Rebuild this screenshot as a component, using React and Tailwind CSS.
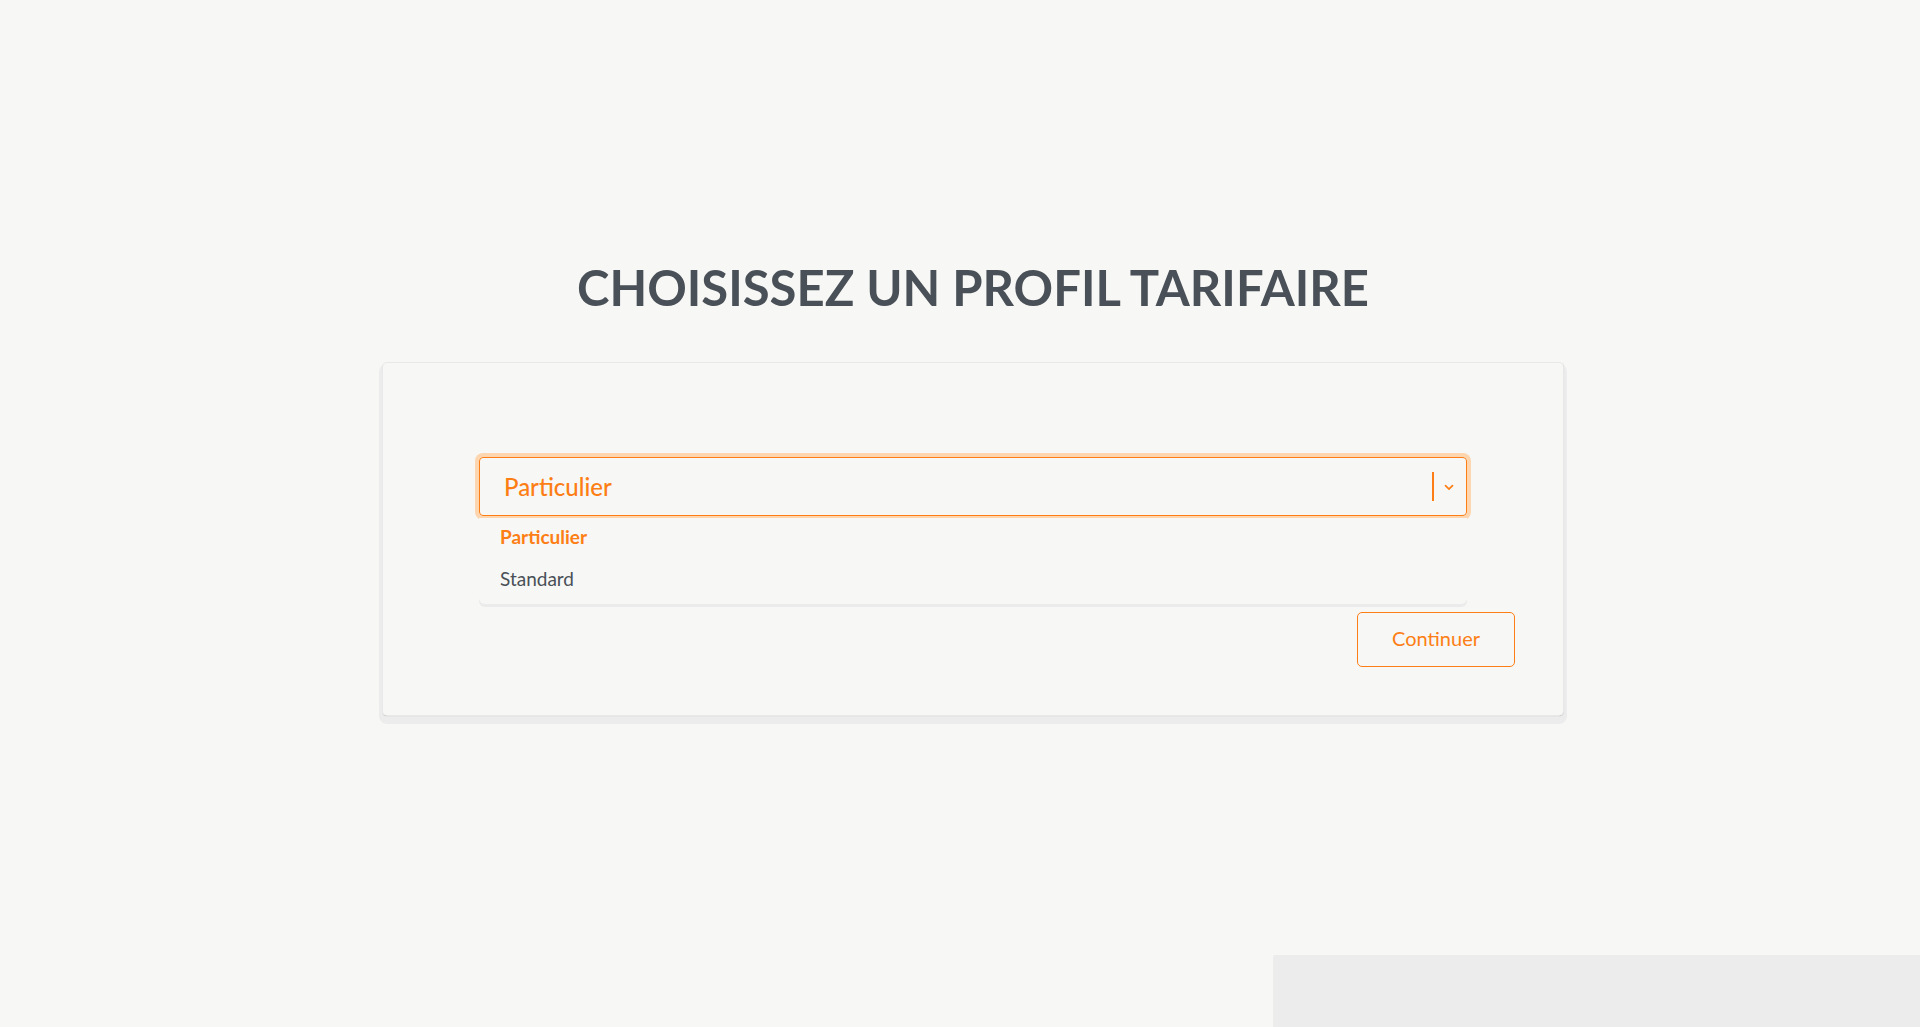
export default function App() {
  return (
    <div className="relative min-h-screen overflow-hidden bg-[#f7f7f5] font-['Lato',sans-serif]">
      <div className="flex flex-col items-center pl-[26px] pt-[258px]">
        <h1 className="text-[49px] font-bold leading-[59px] text-[#495057]">
          CHOISISSEZ UN PROFIL TARIFAIRE
        </h1>

        <div className="mt-[46px] w-[1180px] rounded-[4px] bg-[#f7f7f5] p-12 shadow-[0_0_0_1px_#e8e8e8,0_1px_1px_rgba(0,0,0,0.3),1px_0_1px_rgba(0,0,0,0.15),0_5px_0_4px_#ececec]">
          <div className="relative px-12 pt-[46px]">
            <div className="flex h-[59px] items-center rounded-[4px] border border-[#fd7e14] pl-[24px] pr-[10px] ring-4 ring-[#fdd6b0]">
              <span className="flex-1 text-[24px] font-medium text-[#fd7e14]">Particulier</span>
              <span className="h-[29px] w-[2px] bg-[#fd7e14]" />
              <svg className="ml-[8px] h-[14px] w-[14px] text-[#fd7e14]" viewBox="0 0 20 20" fill="none" stroke="currentColor" strokeWidth={2.4} strokeLinecap="round">
                <path d="M5 8l5 5 5-5" />
              </svg>
            </div>

            {/* dropdown menu */}
            <div className="absolute left-12 right-12 top-[107px] z-10 rounded-b-[6px] bg-[#f7f7f5] pb-[2px] shadow-[0_3px_0_#ebebeb]">
              <div className="flex h-[38px] items-center px-[21px] text-[19px] font-bold text-[#fd7e14]">Particulier</div>
              <div className="flex h-[46px] items-center px-[21px] text-[19px] text-[#495057]">Standard</div>
            </div>
          </div>

          <div className="mt-[96px] flex justify-end">
            <button className="h-[55px] w-[158px] rounded-[5px] border border-[#fd7e14] pb-[3px] text-[20px] text-[#fd7e14]">
              Continuer
            </button>
          </div>
        </div>
      </div>

      <div className="absolute bottom-0 right-0 h-[72px] w-[647px] rounded-tl-[2px] bg-[#ececec]" />
    </div>
  )
}
